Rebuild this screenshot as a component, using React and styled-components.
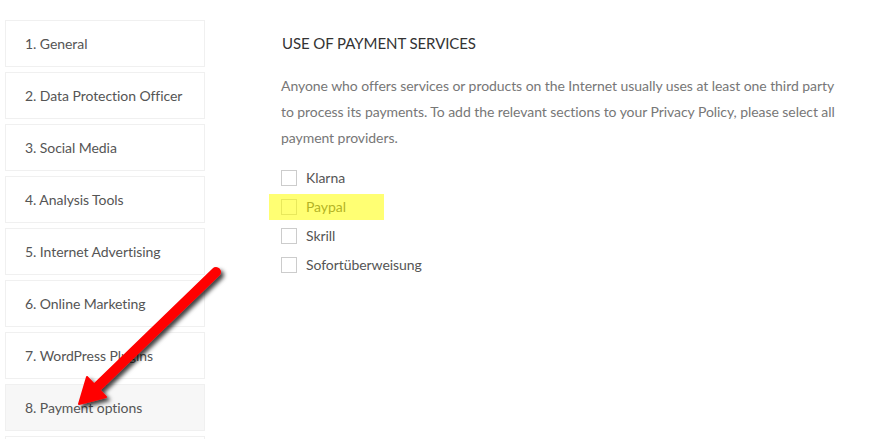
import React from "react";
import styled, { createGlobalStyle } from "styled-components";

const sections = [
  "1. General",
  "2. Data Protection Officer",
  "3. Social Media",
  "4. Analysis Tools",
  "5. Internet Advertising",
  "6. Online Marketing",
  "7. WordPress Plugins",
  "8. Payment options",
  "",
];

const providers = [
  { name: "Klarna" },
  { name: "Paypal", marked: true },
  { name: "Skrill" },
  { name: "Sofortüberweisung" },
];

const App = () => {
  return (
    <>
      <GlobalStyle />
      <Page>
        <Sidebar>
          {sections.map((label, i) => (
            <NavItem key={i} $active={i === 7}>
              {label}
            </NavItem>
          ))}
        </Sidebar>
        <Content>
          <Heading>Use of payment services</Heading>
          <Text>
            Anyone who offers services or products on the Internet usually uses
            at least one third party to process its payments. To add the
            relevant sections to your Privacy Policy, please select all payment
            providers.
          </Text>
          <Options>
            {providers.map((p) => (
              <Option key={p.name}>
                <Box type="checkbox" />
                <span>{p.name}</span>
                {p.marked && <Marker />}
              </Option>
            ))}
          </Options>
        </Content>
        <Arrow viewBox="0 0 888 439">
          <defs>
            <filter id="shade" x="-20%" y="-20%" width="140%" height="140%">
              <feDropShadow
                dx="3"
                dy="3"
                stdDeviation="2"
                floodColor="#000"
                floodOpacity="0.75"
              />
            </filter>
          </defs>
          <g filter="url(#shade)" fill="#f00" stroke="#f00">
            <line
              x1="216"
              y1="272"
              x2="95"
              y2="389"
              strokeWidth="10"
              strokeLinecap="round"
            />
            <polygon
              points="79,404 87,377 106,397"
              strokeWidth="2"
              strokeLinejoin="round"
            />
          </g>
        </Arrow>
      </Page>
    </>
  );
};

const GlobalStyle = createGlobalStyle`
  html, body {
    margin: 0;
    padding: 0;
    background: #fff;
    overflow: hidden;
  }

  body {
    font-family: Lato, "Open Sans", sans-serif;
    color: #555;
    letter-spacing: -0.06px;
  }

  * {
    box-sizing: border-box;
  }
`;

const Page = styled.div`
  position: relative;
  display: flex;
  align-items: flex-start;
  width: 888px;
  height: 439px;
  padding: 20px 0 0 5px;
  overflow: hidden;
`;

const Sidebar = styled.nav`
  display: flex;
  flex-direction: column;
  gap: 5px;
  width: 200px;
  flex-shrink: 0;
`;

const NavItem = styled.div`
  height: 47px;
  display: flex;
  align-items: center;
  padding: 0 19px;
  border: 1px solid #f0f0f0;
  background: ${(props) => (props.$active ? "#f7f7f7" : "#fff")};
  font-size: 14px;
  color: #555;
  white-space: nowrap;
`;

const Content = styled.main`
  margin-left: 76px;
  width: 565px;
`;

const Heading = styled.h2`
  margin: 13px 0 0;
  font-size: 15px;
  line-height: 20px;
  font-weight: normal;
  letter-spacing: -0.08px;
  text-transform: uppercase;
  color: #333;
  padding-left: 1px;
`;

const Text = styled.p`
  margin: 20px 0 0;
  font-size: 14px;
  line-height: 26px;
  color: #777;
`;

const Options = styled.div`
  margin-top: 12px;
  display: flex;
  flex-direction: column;
`;

const Option = styled.label`
  position: relative;
  height: 29px;
  display: flex;
  align-items: center;
  gap: 9px;
  font-size: 14px;
  color: #555;
`;

const Box = styled.input`
  appearance: none;
  margin: 0;
  width: 16px;
  height: 16px;
  border: 1px solid #ccc;
  background: #fff;
`;

const Marker = styled.span`
  position: absolute;
  left: -12px;
  top: 2px;
  width: 115px;
  height: 26px;
  background: rgba(255, 255, 0, 0.55);
  pointer-events: none;
`;

const Arrow = styled.svg`
  position: absolute;
  top: 0;
  left: 0;
  width: 888px;
  height: 439px;
  pointer-events: none;
`;

export default App;
